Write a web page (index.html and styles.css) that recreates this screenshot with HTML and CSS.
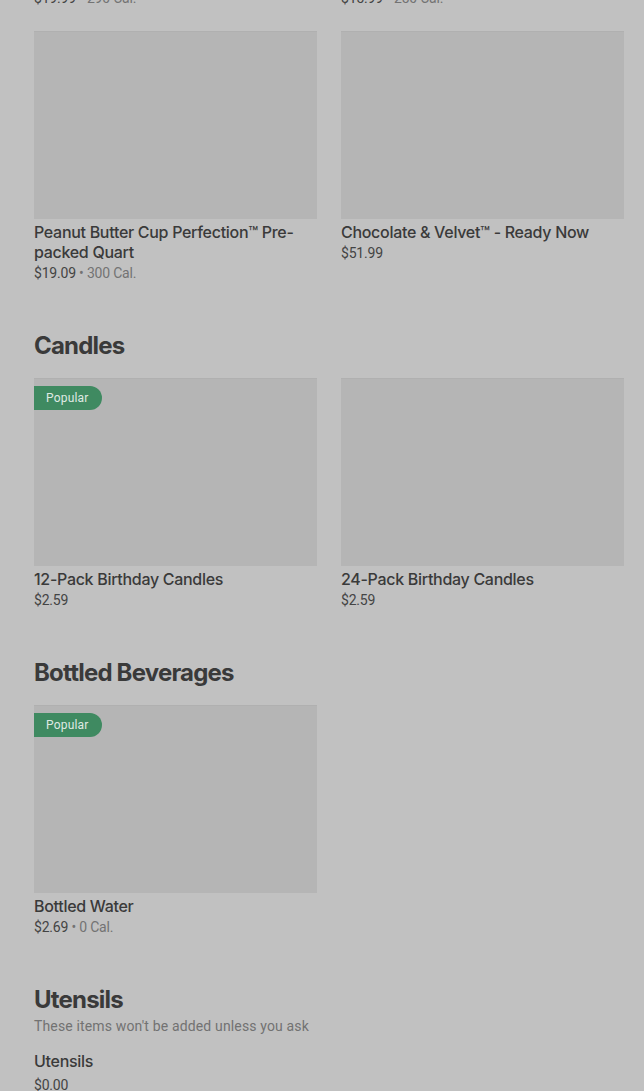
FILE: index.html
```html
<!DOCTYPE html>
<html lang="en">
<head>
  <meta charset="UTF-8">
  <meta name="viewport" content="width=device-width, initial-scale=1">
  <title>Menu</title>
  <link rel="stylesheet" href="styles.css">
</head>
<body>
  <div class="menu">
    <div class="grid scrolled">
      <div class="item">
        <div class="price">$19.99 <span class="cal">• 290 Cal.</span></div>
      </div>
      <div class="item">
        <div class="price">$15.99 <span class="cal">• 250 Cal.</span></div>
      </div>
    </div>

    <div class="grid">
      <div class="item">
        <div class="photo"></div>
        <div class="name">Peanut Butter Cup Perfection™ Pre-packed Quart</div>
        <div class="price">$19.09 <span class="cal">• 300 Cal.</span></div>
      </div>
      <div class="item">
        <div class="photo"></div>
        <div class="name">Chocolate &amp; Velvet™ - Ready Now</div>
        <div class="price">$51.99</div>
      </div>
    </div>

    <section class="section">
      <h2>Candles</h2>
      <div class="grid">
        <div class="item">
          <div class="photo"><span class="badge">Popular</span></div>
          <div class="name">12-Pack Birthday Candles</div>
          <div class="price">$2.59</div>
        </div>
        <div class="item">
          <div class="photo"></div>
          <div class="name">24-Pack Birthday Candles</div>
          <div class="price">$2.59</div>
        </div>
      </div>
    </section>

    <section class="section">
      <h2>Bottled Beverages</h2>
      <div class="grid">
        <div class="item">
          <div class="photo"><span class="badge">Popular</span></div>
          <div class="name">Bottled Water</div>
          <div class="price">$2.69 <span class="cal">• 0 Cal.</span></div>
        </div>
      </div>
    </section>

    <section class="section">
      <h2>Utensils</h2>
      <p class="note">These items won't be added unless you ask</p>
      <div class="row-item">
        <div class="name">Utensils</div>
        <div class="price">$0.00</div>
      </div>
    </section>
  </div>
</body>
</html>
```

FILE: styles.css
```css
* { box-sizing: border-box; }
body {
  margin: 0;
  background: #c1c1c1;
  color: #3a3a3a;
  font-family: Roboto, 'Liberation Sans', sans-serif;
  overflow: hidden;
}
.menu {
  padding: 0 20px 0 34px;
}
.grid {
  display: grid;
  grid-template-columns: 283px 283px;
  column-gap: 24px;
}
.scrolled {
  margin-top: -13px;
  margin-bottom: 23px;
}
.photo {
  position: relative;
  height: 188px;
  background: #b5b5b5;
  box-shadow: inset 0 1px 0 #b0b0b0;
}
.badge {
  position: absolute;
  top: 8px;
  left: 0;
  height: 24px;
  padding: 0 13px 0 12px;
  line-height: 24px;
  font-size: 12px;
  letter-spacing: 0.2px;
  color: #dfe9e3;
  background: #3f8a61;
  border-radius: 0 12px 12px 0;
}
.name {
  margin-top: 3px;
  font-family: Inter, Roboto, sans-serif;
  font-size: 16px;
  font-weight: 500;
  letter-spacing: -0.3px;
  line-height: 20px;
  color: #3a3a3a;
}
.price {
  margin-top: 1px;
  font-size: 14px;
  letter-spacing: -0.2px;
  line-height: 20px;
  color: #444;
}
.cal {
  color: #737373;
}
.section {
  margin-top: 47px;
}
.section h2 {
  margin: 0 0 16px;
  font-family: Inter, 'Liberation Sans', sans-serif;
  font-size: 24px;
  font-weight: 700;
  letter-spacing: -0.8px;
  line-height: 32px;
  color: #3a3a3a;
}
.note {
  margin: -16px 0 15px;
  font-size: 14px;
  letter-spacing: 0.15px;
  line-height: 20px;
  color: #727272;
}
.row-item .price {
  margin-top: 4px;
}
```
